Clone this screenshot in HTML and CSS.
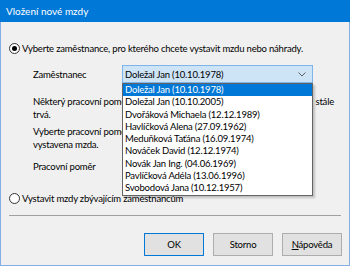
FILE: index.html
```html
<!DOCTYPE html>
<html lang="cs">
<head>
    <meta charset="UTF-8">
    <title>Vložení nové mzdy</title>
    <link rel="stylesheet" href="styles.css">
</head>
<body>
    <div class="window">
        <div class="titlebar">Vložení nové mzdy</div>
        <div class="content">
            <label class="radio-row">
                <span class="radio checked"></span>
                <span>Vyberte zaměstnance, pro kterého chcete vystavit mzdu nebo náhrady.</span>
            </label>

            <div class="group">
                <div class="field-row">
                    <span class="field-label">Zaměstnanec</span>
                    <div class="combo focused">
                        <span>Doležal Jan (10.10.1978)</span>
                        <svg class="chevron" width="8" height="5" viewBox="0 0 8 5"><path d="M0.5 0.5 L4 4 L7.5 0.5" fill="none" stroke="#606060" stroke-width="1"/></svg>
                    </div>
                </div>
                <p class="note">
                    <span class="full-line"><span>Některý pracovní poměr zaměstnance již skončil, jiný však</span><span>stále</span></span>trvá.
                </p>
                <p class="note">Vyberte pracovní poměr, ke kterému má být<br>vystavena mzda.</p>
                <div class="field-row">
                    <span class="field-label">Pracovní poměr</span>
                    <div class="combo"></div>
                </div>
            </div>

            <label class="radio-row second">
                <span class="radio"></span>
                <span>Vystavit mzdy zbývajícím zaměstnancům</span>
            </label>

            <div class="separator"></div>

            <div class="buttons">
                <button class="btn btn-default">OK</button>
                <button class="btn">Storno</button>
                <button class="btn"><u>N</u>ápověda</button>
            </div>

            <ul class="dropdown">
                <li class="selected">Doležal Jan (10.10.1978)</li>
                <li>Doležal Jan (10.10.2005)</li>
                <li>Dvořáková Michaela (12.12.1989)</li>
                <li>Havlíčková Alena (27.09.1962)</li>
                <li>Meduňková Taťána (16.09.1974)</li>
                <li>Nováček David (12.12.1974)</li>
                <li>Novák Jan Ing. (04.06.1969)</li>
                <li>Pavlíčková Adéla (13.06.1996)</li>
                <li>Svobodová Jana (10.12.1957)</li>
            </ul>
        </div>
    </div>
</body>
</html>
```

FILE: styles.css
```css
body {
    margin: 0;
    background: #f0f0f0;
    font-family: Lato, sans-serif;
    font-size: 9.5px;
    line-height: 13px;
    letter-spacing: -0.2px;
    color: #000;
}
.window {
    width: 350px;
    height: 266px;
    box-sizing: border-box;
    border: 1px solid #86aee6;
    border-top: none;
    background: #f0f0f0;
}
.titlebar {
    height: 22px;
    margin: 0 -1px;
    padding-left: 6px;
    background: #0078d7;
    color: #fff;
    font-size: 10px;
    letter-spacing: 0;
    line-height: 23px;
}
.content {
    position: relative;
    padding: 19px 7px 0 8px;
}
.radio-row {
    display: flex;
    align-items: center;
    gap: 2px;
    height: 14px;
}
.radio-row.second {
    margin-top: 16px;
}
.radio {
    width: 11px;
    height: 11px;
    box-sizing: border-box;
    border: 1px solid #333;
    border-radius: 50%;
    background: #fff;
    position: relative;
}
.radio.checked::after {
    content: '';
    position: absolute;
    left: 2px;
    top: 2px;
    width: 5px;
    height: 5px;
    border-radius: 50%;
    background: #000;
}
.group {
    padding-left: 24px;
    margin-top: 10px;
}
.field-row {
    display: flex;
    align-items: center;
    height: 18px;
}
.field-label {
    width: 89px;
}
.field-row + .note {
    margin-top: 12px;
}
.note {
    margin: 4px 0 0;
    padding-right: 8px;
}
.full-line {
    display: flex;
    justify-content: space-between;
}
.note + .field-row {
    margin-top: 6px;
}
.combo {
    width: 191px;
    height: 18px;
    box-sizing: border-box;
    border: 1px solid #7a7a7a;
    background: #fff;
    display: flex;
    align-items: center;
    justify-content: space-between;
    padding: 0 6px 0 2px;
}
.combo.focused {
    background: #cde4f7;
    border-color: #7eb4ea;
}
.separator {
    margin-top: 10px;
    height: 1px;
    background: #a0a0a0;
    margin-right: 1px;
}
.buttons {
    display: flex;
    justify-content: flex-end;
    gap: 9px;
    margin-top: 17px;
}
.btn {
    width: 60px;
    height: 23px;
    border: 1px solid #adadad;
    background: #e1e1e1;
    font-family: inherit;
    font-size: 9.5px;
    letter-spacing: -0.2px;
    color: #000;
    padding: 0;
}
.btn-default {
    border-color: #0078d7;
}
.dropdown {
    position: absolute;
    left: 121px;
    top: 61px;
    width: 191px;
    box-sizing: border-box;
    margin: 0;
    padding: 0;
    list-style: none;
    background: #fff;
    border: 1px solid #646464;
    box-shadow: 2px 2px 2px rgba(0, 0, 0, 0.2);
}
.dropdown li {
    height: 12.3px;
    line-height: 12.3px;
    padding-left: 2px;
    white-space: nowrap;
}
.dropdown li.selected {
    background: #0078d7;
    color: #fff;
}
```
